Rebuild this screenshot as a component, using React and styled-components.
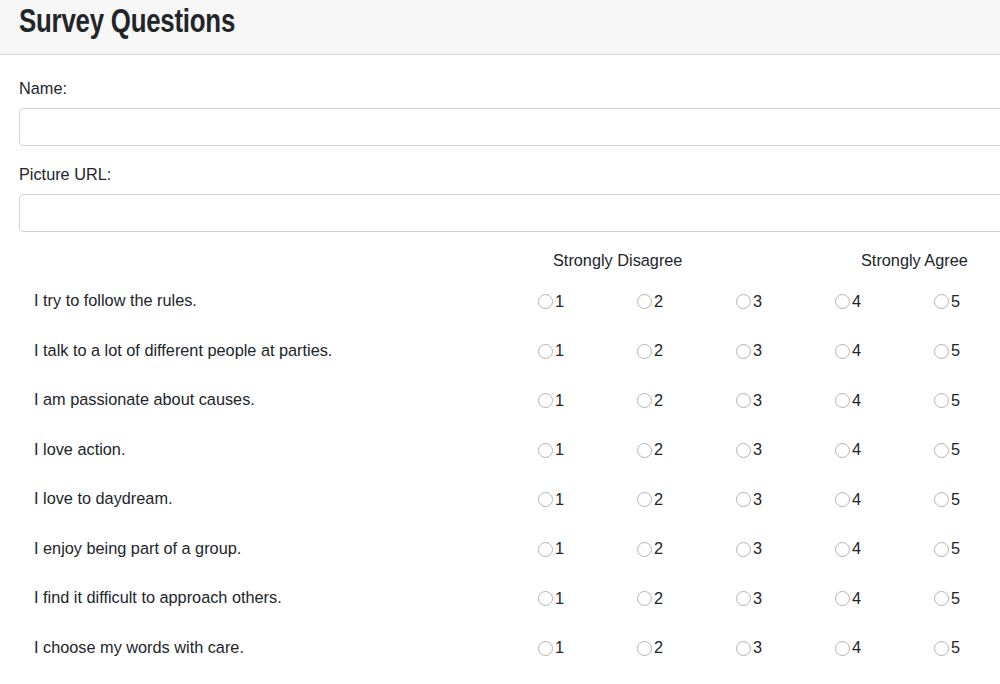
import React from "react";
import styled, { createGlobalStyle } from "styled-components";

const GlobalStyle = createGlobalStyle`
  body {
    margin: 0;
    background: #fff;
    font-family: "Liberation Sans", Arial, sans-serif;
    color: #212529;
    overflow: hidden;
  }
`;

const Page = styled.div`
  width: 1040px;
`;

const TopBar = styled.div`
  height: 54px;
  background: #f7f7f7;
  border-bottom: 1px solid #d6d6d6;
  padding-left: 19px;
  display: flex;
  align-items: center;
`;

const Title = styled.h1`
  margin: 0;
  font-family: "Liberation Sans", Arial, sans-serif;
  font-weight: 700;
  font-size: 34px;
  letter-spacing: -0.3px;
  color: #212529;
  transform-origin: left center;
  transform: translateY(-7px) scaleX(0.76);
  white-space: nowrap;
`;

const Form = styled.div`
  display: flow-root;
  padding: 24px 0 0 19px;
`;

const Label = styled.div`
  font-size: 16.3px;
  line-height: 18px;
  margin-bottom: 11px;
`;

const TextInput = styled.input`
  display: block;
  box-sizing: border-box;
  width: 1010px;
  height: 38px;
  border: 1px solid #ced4da;
  border-radius: 4px;
  margin: 0 0 19px;
  font-size: 15px;
`;

const Table = styled.div`
  display: grid;
  grid-template-columns: 514px repeat(5, 99px);
  margin: 0 0 0 19px;
  font-size: 16.3px;
`;

const HeadCell = styled.div`
  grid-column: ${(p) => p.col} / span 2;
  padding-left: ${(p) => p.offset}px;
  height: 18px;
  line-height: 18px;
`;

const Question = styled.div`
  grid-column: 1;
  padding-left: 15px;
  height: 49.5px;
  display: flex;
  align-items: center;
  padding-top: ${(p) => (p.first ? 7 : 0)}px;
`;

const Choice = styled.label`
  display: flex;
  align-items: center;
  gap: 2px;
  padding-left: 5px;
  height: 49.5px;
  padding-top: ${(p) => (p.first ? 7 : 0)}px;
  line-height: 1;
`;

const Radio = styled.input`
  appearance: none;
  margin: 0;
  width: 15px;
  height: 15px;
  border: 1px solid #b3b3b3;
  border-radius: 50%;
  background: #fff;
  transform: translateY(1px);
`;

const questions = [
  "I try to follow the rules.",
  "I talk to a lot of different people at parties.",
  "I am passionate about causes.",
  "I love action.",
  "I love to daydream.",
  "I enjoy being part of a group.",
  "I find it difficult to approach others.",
  "I choose my words with care.",
];

const App = () => {
  return (
    <Page>
      <GlobalStyle />
      <TopBar>
        <Title>Survey Questions</Title>
      </TopBar>
      <Form>
        <Label>Name:</Label>
        <TextInput type="text" />
        <Label>Picture URL:</Label>
        <TextInput type="text" />
      </Form>
      <Table>
        <HeadCell col={2} offset={20}>
          Strongly Disagree
        </HeadCell>
        <HeadCell col={5} offset={31}>
          Strongly Agree
        </HeadCell>
        {questions.map((q, i) => (
          <React.Fragment key={i}>
            <Question first={i === 0}>{q}</Question>
            {[1, 2, 3, 4, 5].map((n) => (
              <Choice key={n} first={i === 0}>
                <Radio type="radio" name={"q" + i} value={n} />
                {n}
              </Choice>
            ))}
          </React.Fragment>
        ))}
      </Table>
    </Page>
  );
};

export default App;
